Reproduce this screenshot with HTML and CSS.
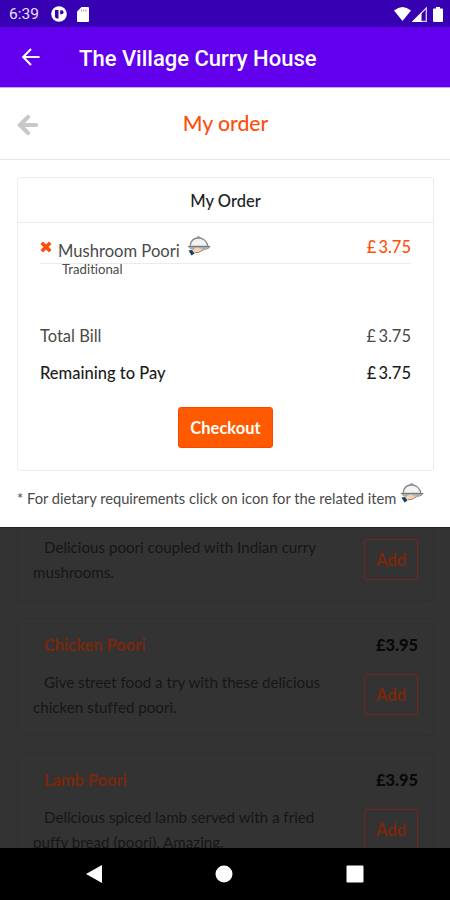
FILE: index.html
```html
<!DOCTYPE html>
<html lang="en">
<head>
  <meta charset="UTF-8">
  <meta name="viewport" content="width=device-width, initial-scale=1.0">
  <title>The Village Curry House</title>
  <link rel="stylesheet" href="styles.css">
</head>
<body>
  <!-- Dish icon, used in the order line and in the note -->
  <svg class="defs" width="0" height="0">
    <symbol id="dish" viewBox="0 0 24 22">
      <path d="M3 11.500C3.500 6 7 3 11.500 3S20 6 21 11.500z" fill="#f3f3f3" stroke="#85888a" stroke-width="1.300"/>
      <path d="M10 2.500a1.600 1.300 0 0 1 3 0" fill="#999" stroke="#777"/>
      <path d="M1 11.500h22l-3 3-6 1.500H8l-5-2z" fill="#a9abad"/>
      <path d="M1 11.500h22l-2.500 2.500" fill="none" stroke="#77797b"/>
      <path d="M5 16l3-3 3-.5 2 1 3 .3-1 2.200-4 1.700-4 .8z" fill="#f3d3b0"/>
      <path d="M8 17.800l4-.5 4-2.500" fill="none" stroke="#8b735e" stroke-width=".8"/>
      <path d="M1.500 15.500l3.500-.5 2.500 3.500L4.500 20.500z" fill="#16405f"/>
    </symbol>
  </svg>

  <div class="phone">
    <div class="status-bar">
      <span class="clock">6:39</span>
      <svg class="status-app" width="16" height="16" viewBox="0 0 16 16">
        <circle cx="8" cy="8" r="7.800" fill="#fff"/>
        <path d="M4 4h3.500v8.500H5.500L4 11z" fill="#3700b3"/>
        <path d="M9.200 4.200h1.300a2 2 0 0 1 0 4H9.200z" fill="#3700b3"/>
      </svg>
      <svg class="status-sd" width="12" height="15" viewBox="0 0 12 15">
        <path d="M4.500 0H11a1 1 0 0 1 1 1v13a1 1 0 0 1-1 1H1a1 1 0 0 1-1-1V4.500z" fill="#fff"/>
        <path d="M4.500 2.500v2M6.700 2.500v2M8.900 2.500v2" stroke="#a58bdc"/>
      </svg>
      <div class="status-right">
        <svg width="17" height="14" viewBox="0 0 17 14">
          <path d="M0 3.500Q8.500-3.500 17 3.500L8.500 14z" fill="#fff"/>
        </svg>
        <svg width="15" height="15" viewBox="0 0 15 15">
          <path d="M14.300 1v13.300H1z" fill="none" stroke="#d9cdf2" stroke-width="1.300"/>
          <path d="M0 15L9.500 5.500V15z" fill="#fff"/>
        </svg>
        <svg class="battery" width="10" height="15" viewBox="0 0 10 15">
          <path d="M3 0h4v1.500h2a1 1 0 0 1 1 1V14a1 1 0 0 1-1 1H1a1 1 0 0 1-1-1V2.500a1 1 0 0 1 1-1h2z" fill="#fff"/>
        </svg>
      </div>
    </div>

    <div class="app-bar">
      <svg width="18" height="18" viewBox="0 0 18 18">
        <path d="M17.500 9H1.500M9 1L1.200 9 9 17" fill="none" stroke="#fff" stroke-width="2"/>
      </svg>
      <h1>The Village Curry House</h1>
    </div>

    <div class="sheet">
      <div class="sheet-header">
        <svg class="sheet-back" width="21" height="22" viewBox="0 0 21 22">
          <path d="M11 3L3 11l8 8M4 11h15" fill="none" stroke="#c8c8c8" stroke-width="4.200" stroke-linecap="round"/>
        </svg>
        <h2>My order</h2>
      </div>

      <div class="order-card">
        <h3>My Order</h3>
        <div class="order-body">
          <div class="order-item">
            <svg class="remove" width="12" height="12" viewBox="0 0 12 12">
              <path d="M1.700 1.700l8.600 8.600M10.300 1.700l-8.600 8.600" stroke="#fd4f0c" stroke-width="3.600"/>
            </svg>
            <span class="item-name">Mushroom Poori</span>
            <svg class="dish" width="24" height="22"><use href="#dish"/></svg>
            <span class="item-price">£ 3.75</span>
          </div>
          <div class="item-group">Traditional</div>
          <div class="total"><span>Total Bill</span><span>£ 3.75</span></div>
          <div class="total remaining"><span>Remaining to Pay</span><span>£ 3.75</span></div>
          <button class="checkout">Checkout</button>
        </div>
      </div>

      <div class="note">
        <span>* For dietary requirements click on icon for the related item</span>
        <svg class="dish" width="24" height="22"><use href="#dish"/></svg>
      </div>
    </div>

    <!-- Menu behind the order sheet -->
    <div class="menu">
      <div class="menu-item cut">
        <div class="menu-row">
          <p>Delicious poori coupled with Indian curry mushrooms.</p>
          <button class="add">Add</button>
        </div>
      </div>
      <div class="menu-item">
        <div class="menu-title"><span>Chicken Poori</span><b>£3.95</b></div>
        <div class="menu-row">
          <p>Give street food a try with these delicious chicken stuffed poori.</p>
          <button class="add">Add</button>
        </div>
      </div>
      <div class="menu-item">
        <div class="menu-title"><span>Lamb Poori</span><b>£3.95</b></div>
        <div class="menu-row">
          <p>Delicious spiced lamb served with a fried puffy bread (poori). Amazing.</p>
          <button class="add">Add</button>
        </div>
      </div>
    </div>

    <div class="nav-bar">
      <svg width="16" height="18" viewBox="0 0 16 18"><path d="M16 0v18L0 9z" fill="#fff"/></svg>
      <svg width="18" height="18" viewBox="0 0 18 18"><circle cx="9" cy="9" r="8.500" fill="#fff"/></svg>
      <svg width="18" height="18" viewBox="0 0 18 18"><rect x=".5" y=".5" width="17" height="17" rx="1" fill="#fff"/></svg>
    </div>
  </div>
</body>
</html>
```
FILE: styles.css
```css
:root {
  --orange: #fd4f0c;
  --line: #ebebeb;
}

* {
  box-sizing: border-box;
}

body {
  margin: 0;
  font-family: Lato, sans-serif;
  font-size: 16px;
  font-variant-ligatures: none;
  color: #4a4a4a;
}

h1, h2, h3, p {
  margin: 0;
}

svg {
  display: block;
  flex: none;
}

.defs {
  position: absolute;
}

.phone {
  display: flex;
  flex-direction: column;
  width: 450px;
  height: 900px;
  overflow: hidden;
  background: #fff;
}

/* Android bars */
.status-bar {
  display: flex;
  align-items: center;
  height: 27px;
  padding: 1px 7px 0 9px;
  background: #3700b3;
  color: #e8e0f7;
}

.clock {
  width: 42px;
  font: 15.500px Roboto, sans-serif;
}

.status-sd {
  margin-left: 10px;
}

.status-right {
  display: flex;
  align-items: center;
  gap: 1px;
  margin-left: auto;
}

.battery {
  margin-left: 5px;
}

.app-bar {
  display: flex;
  align-items: center;
  gap: 39px;
  height: 61px;
  padding-left: 22px;
  background: #6200ee;
  border-bottom: 1px solid #c7a6f4;
}

.app-bar h1 {
  padding-top: 2px;
  color: #fff;
  font: 500 22px Roboto, sans-serif;
}

/* Order sheet */
.sheet {
  height: 439px;
  background: #fff;
}

.sheet-header {
  display: grid;
  grid-template-columns: 33px 1fr 33px;
  align-items: center;
  height: 72px;
  padding: 0 17px;
  border-bottom: 1px solid #e6e6e6;
}

.sheet-back {
  margin-top: 2px;
}

.sheet-header h2 {
  margin: -1px 0 0 1px;
  color: var(--orange);
  font-size: 21.200px;
  font-weight: 500;
  text-align: center;
}

.order-card {
  height: 294px;
  margin: 17px 16px 0 17px;
  border: 1px solid var(--line);
  border-radius: 3px;
}

.order-card h3 {
  height: 45px;
  border-bottom: 1px solid var(--line);
  color: #222;
  font-size: 16.500px;
  font-weight: 500;
  line-height: 46px;
  text-align: center;
}

.order-body {
  padding: 10px 22px 0;
}

.order-item {
  display: flex;
  height: 31px;
  border-bottom: 1px solid var(--line);
}

.order-item .dish {
  margin-top: 2px;
}

.remove {
  margin-top: 8px;
}

.item-name {
  margin: 7px 7px 0 6px;
  font-size: 16.600px;
  line-height: 22px;
}

.item-price {
  margin: 3px 0 0 auto;
  color: var(--orange);
  font-size: 16.500px;
  font-weight: 500;
  line-height: 22px;
  word-spacing: -2px;
}

.item-group {
  height: 52px;
  padding-left: 22px;
  font-size: 13.200px;
  line-height: 10px;
}

.total {
  display: flex;
  justify-content: space-between;
  height: 37px;
  font-size: 16.500px;
  line-height: 40px;
}

.total span:last-child {
  word-spacing: -2px;
}

.remaining {
  color: #1c1c1c;
  font-weight: 500;
}

.checkout {
  display: block;
  width: 95px;
  height: 41px;
  margin: 17px auto 0;
  padding: 1px 0 0;
  border: 1px solid #ff4500;
  border-radius: 3px;
  background: #ff5a00;
  color: #fff;
  font: bold 16.500px Lato, sans-serif;
}

.note {
  display: flex;
  justify-content: space-between;
  padding: 11px 26px 0 17px;
  font-size: 14.700px;
  line-height: 32px;
  white-space: nowrap;
}

/* Dimmed menu */
.menu {
  flex: 1;
  min-height: 0;
  overflow: hidden;
  border-top: 1px solid #222;
  background: #333;
  color: #161616;
}

.menu-item {
  height: 118px;
  margin: 0 16px 17px 17px;
  padding: 14px 15px;
  border: 1px solid #303030;
  border-radius: 3px;
}

.menu-item.cut {
  height: 73px;
  padding-top: 7px;
  border-top: 0;
}

.menu-title {
  display: flex;
  justify-content: space-between;
  height: 37px;
  padding-left: 11px;
  color: #7a270c;
  font-size: 16.400px;
  font-weight: bold;
  line-height: 24px;
}

.menu-title b {
  color: #090909;
}

.menu-row {
  display: flex;
  justify-content: space-between;
}

.menu-row p {
  width: 300px;
  font-size: 15.150px;
  line-height: 25px;
  text-indent: 11px;
}

.add {
  width: 54px;
  height: 41px;
  margin-top: 4px;
  padding: 0;
  border: 1px solid #74281a;
  border-radius: 3px;
  background: none;
  color: #7a270c;
  font: bold 16.500px Lato, sans-serif;
}

.nav-bar {
  display: flex;
  justify-content: space-between;
  align-items: center;
  height: 52px;
  padding: 0 86px;
  background: #000;
}
```
